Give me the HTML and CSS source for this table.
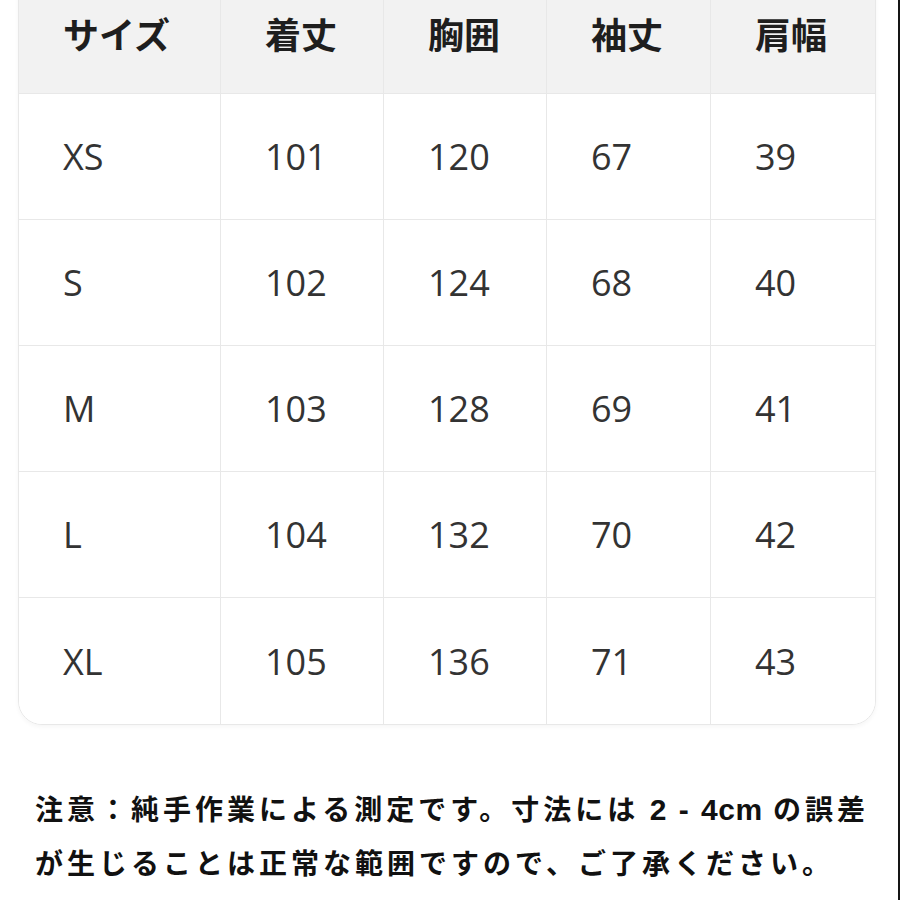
FILE: index.html
```html
<!DOCTYPE html>
<html lang="ja">
<head>
<meta charset="utf-8">
<link rel="stylesheet" href="styles.css">
</head>
<body>
<div class="page">
  <div class="size-table">
    <div class="cell head">サイズ</div>
    <div class="cell head">着丈</div>
    <div class="cell head">胸囲</div>
    <div class="cell head">袖丈</div>
    <div class="cell head last">肩幅</div>

    <div class="cell">XS</div>
    <div class="cell">101</div>
    <div class="cell">120</div>
    <div class="cell">67</div>
    <div class="cell last">39</div>

    <div class="cell">S</div>
    <div class="cell">102</div>
    <div class="cell">124</div>
    <div class="cell">68</div>
    <div class="cell last">40</div>

    <div class="cell">M</div>
    <div class="cell">103</div>
    <div class="cell">128</div>
    <div class="cell">69</div>
    <div class="cell last">41</div>

    <div class="cell">L</div>
    <div class="cell">104</div>
    <div class="cell">132</div>
    <div class="cell">70</div>
    <div class="cell last">42</div>

    <div class="cell bottom">XL</div>
    <div class="cell bottom">105</div>
    <div class="cell bottom">136</div>
    <div class="cell bottom">71</div>
    <div class="cell bottom last">43</div>
  </div>

  <p class="note">注意：純手作業による測定です。寸法には <span class="latin">2 - 4cm</span> の誤差<br>が生じることは正常な範囲ですので、ご了承ください。</p>
</div>
</body>
</html>
```

FILE: styles.css
```css
html, body {
  margin: 0;
  padding: 0;
  background: #ffffff;
}

.page {
  width: 900px;
  height: 900px;
  box-sizing: border-box;
  border-right: 2px solid #151515;
  overflow: hidden;
  background: #ffffff;
}

.size-table {
  margin: -33px 0 0 18px;
  width: 858px;
  box-sizing: border-box;
  display: grid;
  grid-template-columns: 202px 163px 163px 164px 166px;
  grid-auto-rows: 126px;
  border: 1px solid #e8e8e8;
  border-radius: 0 0 24px 24px;
  overflow: hidden;
  box-shadow: 0 2px 4px rgba(0, 0, 0, 0.04);
}

.cell {
  display: flex;
  align-items: center;
  padding-left: 44px;
  box-sizing: border-box;
  border-right: 1px solid #e8e8e8;
  border-bottom: 1px solid #e8e8e8;
  font-family: "Open Sans", "Noto Sans", sans-serif;
  font-size: 36px;
  color: #333333;
  background: #ffffff;
}

.cell.last {
  border-right: none;
}

.cell.bottom {
  border-bottom: none;
}

.cell.head {
  background: #f2f2f2;
  font-family: "Noto Sans CJK JP", sans-serif;
  font-weight: 700;
  font-size: 36px;
  color: #1e1e1e;
  padding-top: 4px;
}

.note {
  margin: 57px 0 0 35px;
  font-family: "Noto Sans CJK JP", sans-serif;
  font-weight: 700;
  font-size: 28px;
  line-height: 53px;
  letter-spacing: 4px;
  color: #111111;
}

.note .latin {
  font-family: "Liberation Sans", Arial, sans-serif;
  font-size: 30px;
  letter-spacing: 0.5px;
  word-spacing: 3px;
}
```
